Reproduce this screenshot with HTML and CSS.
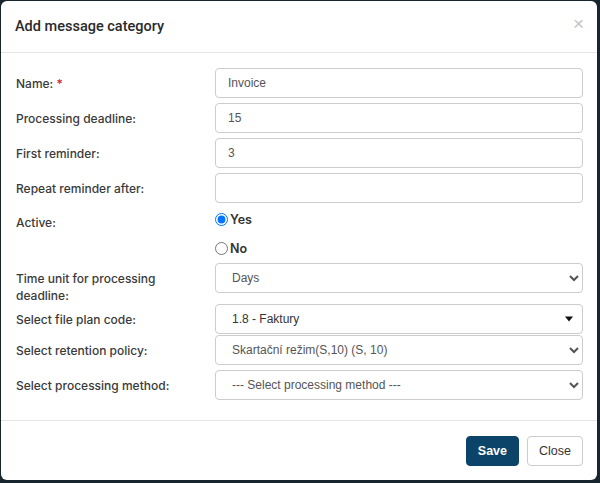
FILE: index.html
```html
<!DOCTYPE html>
<html lang="en">
<head>
    <meta charset="UTF-8">
    <meta name="viewport" content="width=device-width, initial-scale=1.0">
    <title>Add message category</title>
    <link rel="stylesheet" href="styles.css">
</head>
<body>
    <div class="modal">
        <div class="modal-header">
            <h4 class="modal-title">Add message category</h4>
            <span class="close">&times;</span>
        </div>
        <div class="modal-body">
            <div class="form-row">
                <label class="form-label">Name: <span class="req">*</span></label>
                <input class="form-control" type="text" value="Invoice">
            </div>
            <div class="form-row">
                <label class="form-label">Processing deadline:</label>
                <input class="form-control" type="text" value="15">
            </div>
            <div class="form-row">
                <label class="form-label">First reminder:</label>
                <input class="form-control" type="text" value="3">
            </div>
            <div class="form-row">
                <label class="form-label">Repeat reminder after:</label>
                <input class="form-control" type="text" value="">
            </div>
            <div class="form-row">
                <label class="form-label label-active">Active:</label>
                <div class="radios">
                    <label class="radio"><input type="radio" name="active" checked>Yes</label>
                    <label class="radio"><input type="radio" name="active">No</label>
                </div>
            </div>
            <div class="form-row">
                <label class="form-label label-tall">Time unit for processing deadline:</label>
                <select class="form-control">
                    <option>Days</option>
                </select>
            </div>
            <div class="form-row row-tight">
                <label class="form-label">Select file plan code:</label>
                <div class="form-control chosen">
                    <span>1.8 - Faktury</span>
                    <svg width="10" height="8" viewBox="0 0 10 8"><path d="M1 1.5h8L5 6.5z" fill="#111"/></svg>
                </div>
            </div>
            <div class="form-row">
                <label class="form-label">Select retention policy:</label>
                <select class="form-control">
                    <option>Skartační režim(S,10) (S, 10)</option>
                </select>
            </div>
            <div class="form-row">
                <label class="form-label">Select processing method:</label>
                <select class="form-control">
                    <option>--- Select processing method ---</option>
                </select>
            </div>
        </div>
        <div class="modal-footer">
            <button class="btn btn-primary">Save</button>
            <button class="btn btn-default">Close</button>
        </div>
    </div>
</body>
</html>
```

FILE: styles.css
```css
body{
    margin: 0;
    background: #17252e;
    font-family: Inter, "Liberation Sans", sans-serif;
    color: #333;
}
.modal{
    margin: 1px 3px 0 1px;
    height: 479px;
    background: #fff;
    border-radius: 6px;
    overflow: hidden;
}
/* header */
.modal-header{
    height: 51px;
    padding: 0 15px 0 14px;
    border-bottom: 1px solid #e5e5e5;
    display: flex;
    align-items: center;
    justify-content: space-between;
}
.modal-title{
    margin: 0;
    font-family: Roboto, "Liberation Sans", sans-serif;
    font-size: 14.5px;
    font-weight: 500;
    color: #2a2a2a;
}
.close{
    font-family: "Liberation Sans", sans-serif;
    font-size: 19px;
    color: #c4c4c4;
    margin-top: -5px;
    margin-right: -2px;
}
/* body */
.modal-body{
    padding: 15px 14px 20px 15px;
}
.form-row{
    display: grid;
    grid-template-columns: 199px 1fr;
    margin-bottom: 5px;
    align-items: start;
}
.form-row:last-child{
    margin-bottom: 0;
}
.row-tight{
    margin-bottom: 1px;
}
.form-label{
    font-size: 12px;
    font-weight: 500;
    line-height: 17px;
    padding-top: 7px;
    color: #3a3a3a;
}
.label-active{
    padding-top: 6px;
}
.label-tall{
    margin-bottom: -5px;
    padding-right: 40px;
}
.req{
    color: #d9182d;
}
.form-control{
    box-sizing: border-box;
    width: 100%;
    height: 30px;
    padding: 0 12px;
    border: 1px solid #ccc;
    border-radius: 4px;
    background: #fff;
    font-family: "Liberation Sans", Arial, sans-serif;
    font-size: 12px;
    color: #555;
    outline: none;
}
.chosen{
    display: flex;
    align-items: center;
    justify-content: space-between;
    padding: 0 8px 0 16px;
    color: #333;
}
/* radios */
.radios{
    padding-top: 1px;
    display: flex;
    flex-direction: column;
    gap: 9px;
}
.radio{
    height: 20px;
    display: flex;
    align-items: center;
    font-size: 12.5px;
    font-weight: 600;
    color: #333;
}
.radio input{
    margin: 0 2px 0 0;
    width: 13px;
    height: 13px;
}
/* footer */
.modal-footer{
    border-top: 1px solid #e5e5e5;
    padding: 15px 14px 14px 15px;
    display: flex;
    justify-content: flex-end;
    gap: 8px;
}
.btn{
    height: 30px;
    padding: 0 11px;
    border-radius: 4px;
    font-family: "Liberation Sans", Arial, sans-serif;
    font-size: 12.5px;
    cursor: pointer;
}
.btn-primary{
    background: #0b4468;
    border: 1px solid #0b4468;
    color: #fff;
    font-weight: 700;
}
.btn-default{
    background: #fff;
    border: 1px solid #ccc;
    color: #333;
}
```
